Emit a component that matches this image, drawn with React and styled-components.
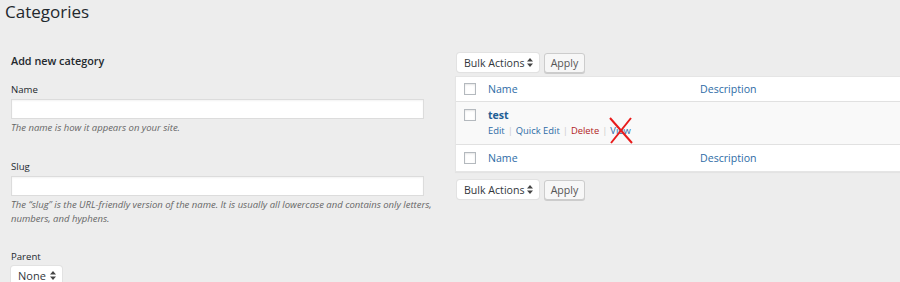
import React from 'react';
import styled, { createGlobalStyle } from 'styled-components';

const GlobalStyle = createGlobalStyle`
  html, body {
    margin: 0;
    padding: 0;
    background: #ededed;
  }
  body {
    width: 900px;
    height: 282px;
    overflow: hidden;
    font-family: 'Open Sans', 'Liberation Sans', sans-serif;
    color: #444;
  }
`;

const Page = styled.div`
  width: 900px;
  height: 282px;
  overflow: hidden;
`;

const Title = styled.h1`
  margin: 0;
  padding-left: 5px;
  font-size: 17px;
  font-weight: 400;
  line-height: 24px;
  color: #23282d;
`;

const Columns = styled.div`
  display: flex;
  align-items: flex-start;
  margin-top: 29px;
  padding-left: 11px;
`;

const FormCol = styled.div`
  width: 413px;
  flex: none;
`;

const ListCol = styled.div`
  width: 480px;
  flex: none;
  margin-left: 31px;
`;

const Heading = styled.h2`
  margin: 0;
  font-size: 10.8px;
  font-weight: 600;
  line-height: 16px;
  color: #23282d;
`;

const Field = styled.div`
  margin-top: ${(p) => p.$gap}px;
`;

const Label = styled.label`
  display: block;
  font-size: 9.6px;
  line-height: 14px;
  color: #23282d;
  margin-bottom: 2px;
`;

const TextInput = styled.input`
  display: block;
  box-sizing: border-box;
  width: 413px;
  height: 20px;
  margin: 0;
  border: 1px solid #dcdcdc;
  background: #fff;
  box-shadow: inset 0 1px 2px rgba(0, 0, 0, 0.05);
  outline: none;
`;

const Help = styled.p`
  width: 440px;
  margin: 2px 0 0;
  font-size: 9.5px;
  line-height: 14px;
  font-style: italic;
  color: #666;
`;

const SelectBox = styled.div`
  box-sizing: border-box;
  display: flex;
  align-items: center;
  justify-content: space-between;
  width: ${(p) => p.$w}px;
  height: 19px;
  padding: 0 6px 0 7px;
  background: #fff;
  border-radius: 3px;
  box-shadow: 0 0 0 1px #e2e2e2, 0 1px 1px rgba(0, 0, 0, 0.06);
  font-size: ${(p) => p.$fs || 10.6}px;
  color: #32373c;
`;

const Arrows = () => (
  <svg width="6" height="9" viewBox="0 0 6 9">
    <path d="M3 0 L6 3.6 H0 Z M3 9 L6 5.4 H0 Z" fill="#444" />
  </svg>
);

const Toolbar = styled.div`
  display: flex;
  align-items: center;
  gap: 5px;
  padding-left: 2px;
  height: 19px;
  margin-top: ${(p) => p.$top || 0}px;
`;

const Button = styled.button`
  box-sizing: border-box;
  height: 20px;
  width: 41px;
  padding: 0;
  border: 1px solid #ccc;
  border-radius: 3px;
  background: #f7f7f7;
  box-shadow: 0 1px 0 #ccc;
  font-family: inherit;
  font-size: 10.6px;
  color: #555;
`;

const Table = styled.div`
  margin-top: 4px;
  background: #fff;
  border: 1px solid #e5e5e5;
  border-right: none;
  box-shadow: 0 1px 1px rgba(0, 0, 0, 0.04);
`;

const Row = styled.div`
  display: grid;
  grid-template-columns: 32px 212px 1fr;
  align-items: ${(p) => (p.$body ? 'start' : 'center')};
  height: ${(p) => p.$h}px;
  background: ${(p) => (p.$body ? '#f9f9f9' : '#fff')};
  border-bottom: ${(p) => (p.$line ? '1px solid #e1e1e1' : 'none')};
  box-sizing: border-box;
`;

const Check = styled.span`
  display: block;
  width: 12px;
  height: 12px;
  margin-left: 8px;
  margin-top: ${(p) => p.$top || 0}px;
  box-sizing: border-box;
  border: 1px solid #b4b9be;
  background: #fff;
  box-shadow: inset 0 1px 2px rgba(0, 0, 0, 0.1);
`;

const HeadLink = styled.span`
  font-size: 10.6px;
  color: #2e6ca6;
`;

const Cell = styled.div`
  padding-top: 6px;
`;

const TermName = styled.div`
  font-size: 10.6px;
  font-weight: 700;
  line-height: 15px;
  color: #1f5f96;
`;

const Actions = styled.div`
  display: flex;
  align-items: center;
  font-size: 9.4px;
  line-height: 15px;
`;

const Action = styled.span`
  position: relative;
  color: ${(p) => (p.$danger ? '#b21f1f' : '#2e6ca6')};
`;

const Sep = styled.span`
  color: #ccc;
  margin: 0 3px;
`;

const Cross = styled.svg`
  position: absolute;
  left: -1px;
  top: -6px;
`;

const ListToolbar = ({ top }) => (
  <Toolbar $top={top}>
    <SelectBox $w={82}>
      Bulk Actions <Arrows />
    </SelectBox>
    <Button>Apply</Button>
  </Toolbar>
);

export default function App() {
  return (
    <Page>
      <GlobalStyle />
      <Title>Categories</Title>
      <Columns>
        <FormCol>
          <Heading>Add new category</Heading>
          <Field $gap={14}>
            <Label>Name</Label>
            <TextInput />
            <Help>The name is how it appears on your site.</Help>
          </Field>
          <Field $gap={25}>
            <Label>Slug</Label>
            <TextInput />
            <Help>
              The “slug” is the URL-friendly version of the name. It is usually all lowercase and contains only letters,
              numbers, and hyphens.
            </Help>
          </Field>
          <Field $gap={24}>
            <Label>Parent</Label>
            <SelectBox $w={51} $fs={11}>
              None <Arrows />
            </SelectBox>
          </Field>
        </FormCol>
        <ListCol>
          <ListToolbar />
          <Table>
            <Row $h={25} $line>
              <Check />
              <HeadLink>Name</HeadLink>
              <HeadLink>Description</HeadLink>
            </Row>
            <Row $h={43} $line $body>
              <Check $top={7} />
              <Cell>
                <TermName>test</TermName>
                <Actions>
                  <Action>Edit</Action>
                  <Sep>|</Sep>
                  <Action>Quick Edit</Action>
                  <Sep>|</Sep>
                  <Action $danger>Delete</Action>
                  <Sep>|</Sep>
                  <Action>
                    View
                    <Cross width="24" height="27" viewBox="0 0 24 27">
                      <path d="M1 1 L23 26 M22 1 L2 26" stroke="#e81b1b" strokeWidth="2" fill="none" />
                    </Cross>
                  </Action>
                </Actions>
              </Cell>
              <div />
            </Row>
            <Row $h={26}>
              <Check />
              <HeadLink>Name</HeadLink>
              <HeadLink>Description</HeadLink>
            </Row>
          </Table>
          <ListToolbar top={8} />
        </ListCol>
      </Columns>
    </Page>
  );
}
